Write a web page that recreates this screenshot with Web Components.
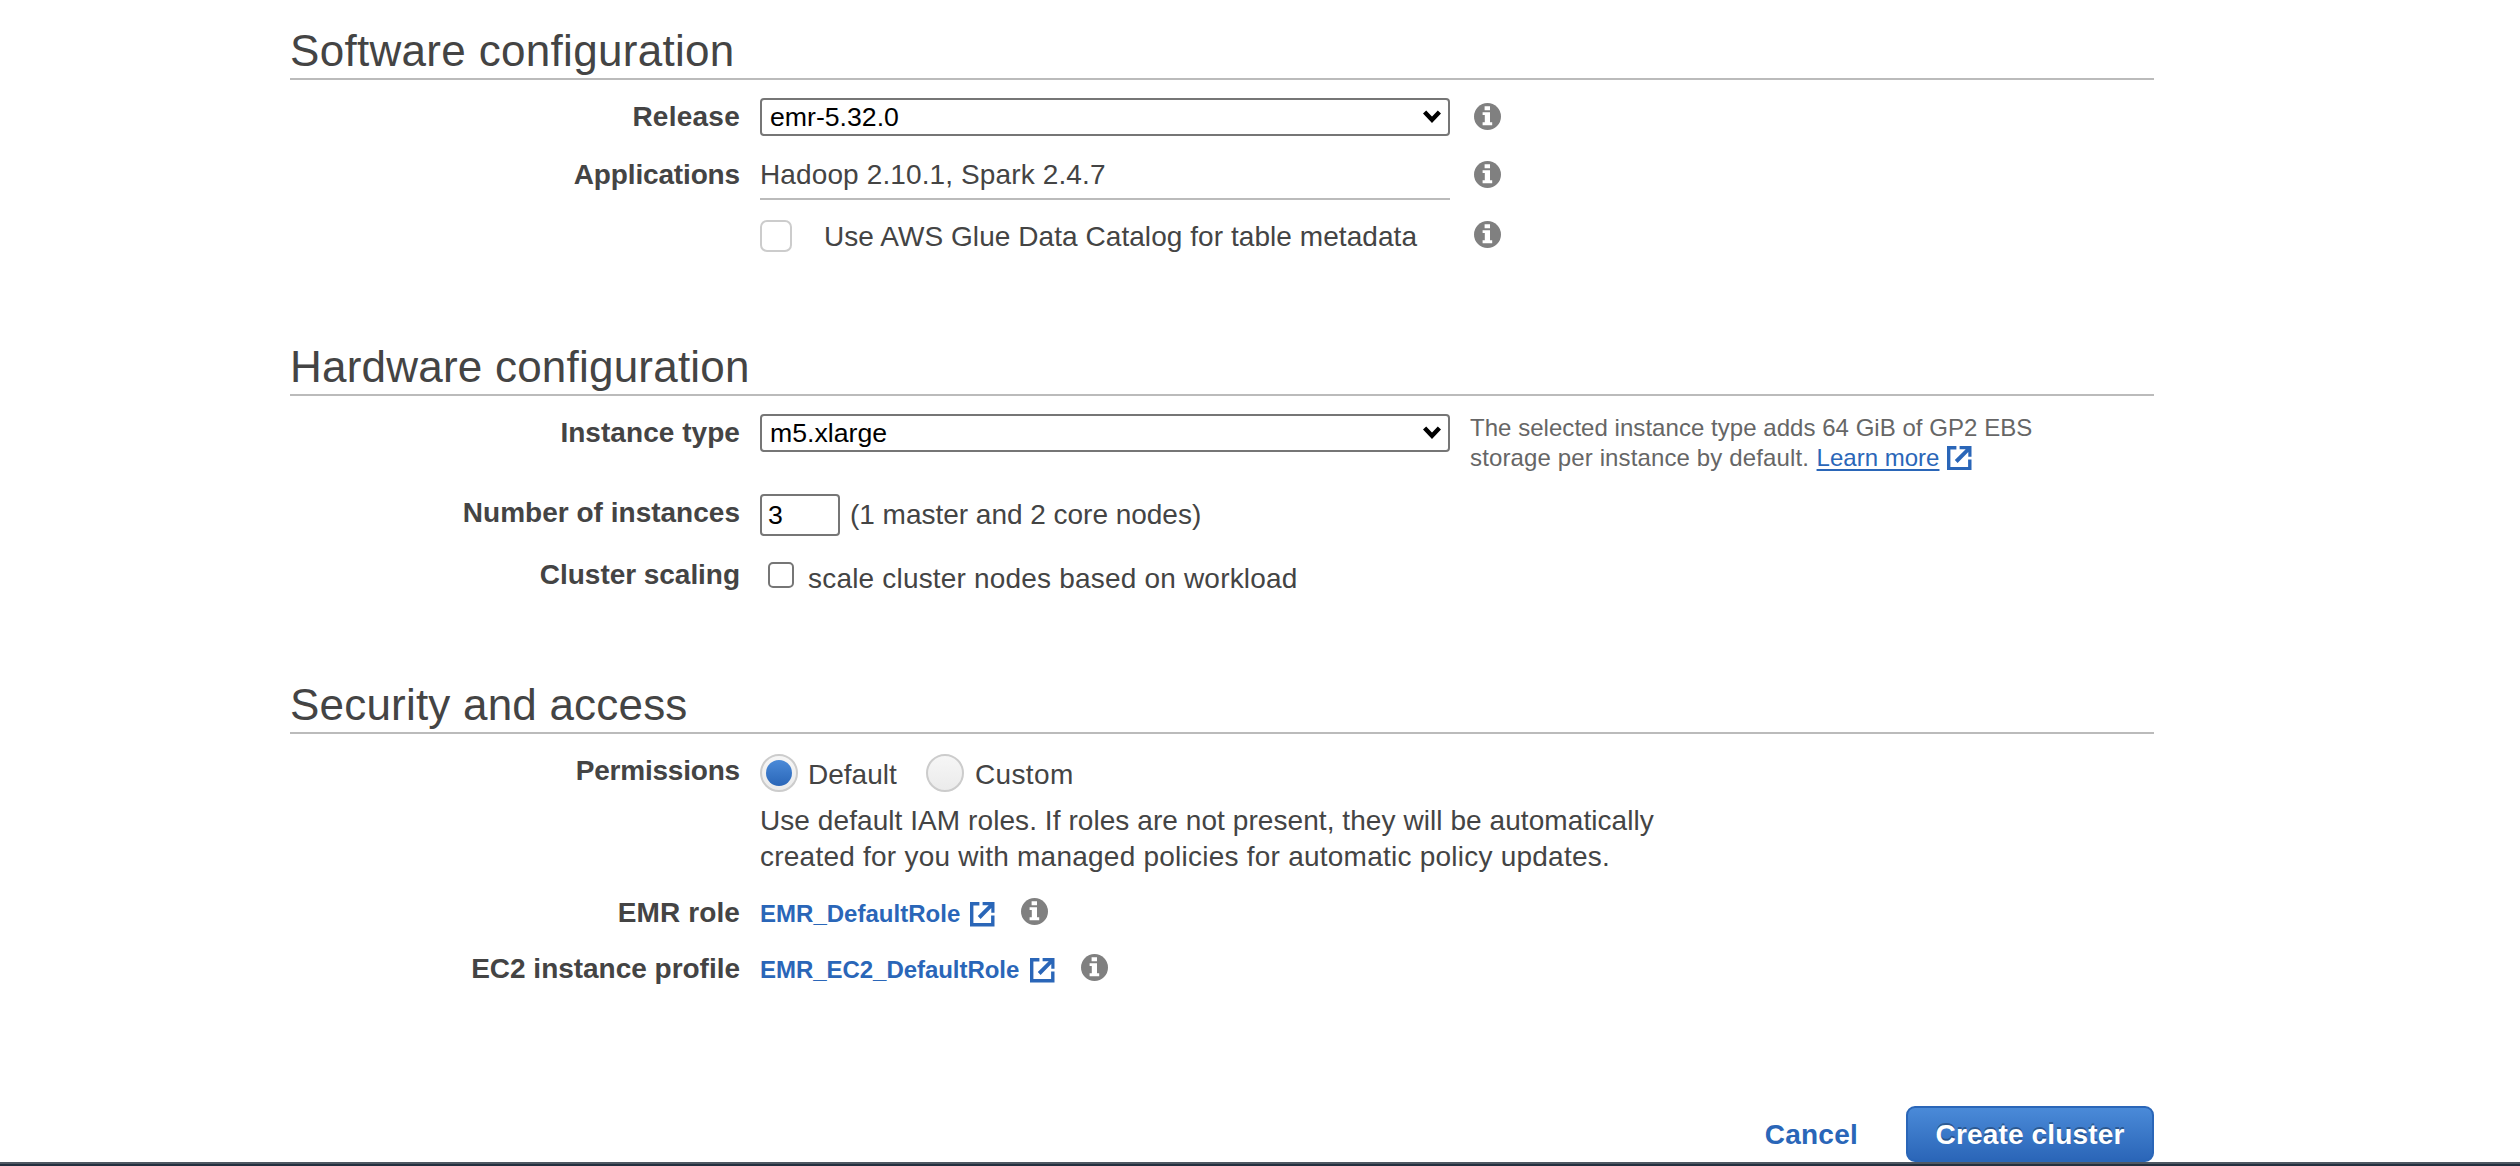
<!DOCTYPE html>
<html lang="en">
<head>
<meta charset="utf-8">
<title>Create cluster</title>
<style>
html,body{margin:0;background:#fff;overflow:hidden}
body{font-family:"Liberation Sans",Arial,sans-serif;font-size:28px;line-height:31px;color:#444}
</style>
</head>
<body>
<emr-page>
  <config-section heading="Software configuration" style="--height:316px;--head-ls:.31px">
    <form-row label="Release" style="--row:70px;--label-y:21px;--label-ls:.25px">
      <select-box style="--y:18px">emr-5.32.0</select-box>
      <info-icon style="--y:22.5px;--x:24px"></info-icon>
    </form-row>
    <form-row label="Applications" style="--row:60px;--label-y:9px;--label-ls:-.15px">
      <under-lined style="--y:9px;--ls:.12px">Hadoop 2.10.1, Spark 2.4.7</under-lined>
      <info-icon style="--y:10.5px;--x:24px"></info-icon>
    </form-row>
    <form-row label="" style="--row:60px;--label-y:9px">
      <check-box style="--y:10px;--size:32px;--radius:7px;--line:#ccc"></check-box>
      <form-text style="--y:11px;--x:32px;--ls:.06px;--w:626px">Use AWS Glue Data Catalog for table metadata</form-text>
      <info-icon style="--y:10.5px;--x:24px"></info-icon>
    </form-row>
  </config-section>
  <config-section heading="Hardware configuration" style="--height:338px;--head-ls:.22px">
    <form-row label="Instance type" style="--row:84px;--label-y:21px;--label-ls:.05px">
      <select-box style="--y:18px">m5.xlarge</select-box>
      <help-note style="--y:18px;--x:20px"></help-note>
    </form-row>
    <form-row label="Number of instances" style="--row:70px;--label-y:17px;--label-ls:.01px">
      <number-box style="--y:14px">3</number-box>
      <form-text style="--y:19px;--x:10px;--ls:-.02px">(1 master and 2 core nodes)</form-text>
    </form-row>
    <form-row label="Cluster scaling" style="--row:60px;--label-y:9px;--label-ls:-.04px">
      <check-box style="--y:12px;--x:8px;--size:26px;--radius:5px;--line:#767676"></check-box>
      <form-text style="--y:13px;--x:14px;--ls:.19px">scale cluster nodes based on workload</form-text>
    </form-row>
  </config-section>
  <config-section heading="Security and access" style="--height:426px;--head-ls:.2px">
    <form-row label="Permissions" style="--row:70px;--label-y:21px;--label-ls:-.2px">
      <radio-dot checked style="--y:20px"></radio-dot>
      <form-text style="--y:25px;--x:10px;--w:118px">Default</form-text>
      <radio-dot style="--y:20px"></radio-dot>
      <form-text style="--y:25px;--x:11px;--ls:.35px">Custom</form-text>
    </form-row>
    <form-row label="" style="--row:80px;--label-y:1px">
      <para-text style="--y:1px"></para-text>
    </form-row>
    <form-row label="EMR role" style="--row:56px;--label-y:13px;--label-ls:.12px">
      <role-link style="--y:16px;--w:210px;--ls:.02px">EMR_DefaultRole</role-link>
      <link-icon style="--y:18px"></link-icon>
      <info-icon style="--y:14px;--x:26px"></info-icon>
    </form-row>
    <form-row label="EC2 instance profile" style="--row:56px;--label-y:13px;--label-ls:-.02px">
      <role-link style="--y:16px;--w:270px;--ls:-.04px">EMR_EC2_DefaultRole</role-link>
      <link-icon style="--y:18px"></link-icon>
      <info-icon style="--y:14px;--x:26px"></info-icon>
    </form-row>
  </config-section>
  <action-bar slot="actions"></action-bar>
</emr-page>
<script>
const place = `:host{display:block;flex:none;box-sizing:border-box;margin:var(--y,0) 0 0 var(--x,0);white-space:nowrap}`;
function define(name, css, html) {
  customElements.define(name, class extends HTMLElement {
    constructor() {
      super();
      this.attachShadow({mode: 'open'}).innerHTML = `<style>${css}</style>${typeof html === 'function' ? html(this) : html}`;
    }
  });
}
const linkSvg = `<svg viewBox="0 0 24.5 24.5" width="24.5" height="24.5"><path d="M9.4 1.7H1.7V22.8H22.8V13.4" fill="none" stroke="#2a66b8" stroke-width="3.4"/><path d="M12.6 0H24.5V10.8H21.3V5.9L10.6 16.9 7.8 14.1 18.7 3.2H12.6Z" fill="#2a66b8"/></svg>`;

define('emr-page', `:host{display:flex;flex-direction:column;box-sizing:border-box;height:1166px;background:#fff}
  main{flex:1;box-sizing:border-box;width:1864px;margin-left:290px;padding-top:26px}
  footer{height:4px;box-sizing:border-box;background:#232f3e;border-top:2px solid #505863}`,
  `<main><slot></slot><slot name="actions"></slot></main><footer></footer>`);

define('config-section', `:host{display:block;height:var(--height)}
  h2{margin:0;font-size:44px;line-height:49px;font-weight:400;letter-spacing:var(--head-ls);padding-bottom:3px;border-bottom:2px solid #bbb}`,
  el => `<h2>${el.getAttribute('heading')}</h2><slot></slot>`);

define('form-row', `:host{display:flex;align-items:flex-start;height:var(--row);box-sizing:border-box}
  label{flex:none;width:450px;margin:var(--label-y) 20px 0 0;text-align:right;font-weight:700;letter-spacing:var(--label-ls)}`,
  el => `<label>${el.getAttribute('label')}</label><slot></slot>`);

define('form-text', place + `:host{letter-spacing:var(--ls,0);width:var(--w,auto)}`, `<slot></slot>`);

define('under-lined', place + `:host{width:690px;height:41px;border-bottom:2px solid #bbb;letter-spacing:var(--ls,0)}`, `<slot></slot>`);

define('select-box', place + `:host{display:flex;justify-content:space-between;width:690px;height:38px;border:2px solid #767676;border-radius:4px;padding:2px 6px 0 8px;font-size:26.67px;line-height:30px;color:#000;background:#fff}
  svg{margin-top:8px}`,
  `<span><slot></slot></span><svg width="20" height="14" viewBox="0 0 20 14"><path d="M2.6 2 10 9.8 17.4 2" fill="none" stroke="#000" stroke-width="4.4"/></svg>`);

define('number-box', place + `:host{width:80px;height:42px;border:2px solid #767676;border-radius:4px;padding:4px 6px 0;font-size:26.67px;line-height:30px;color:#000;background:#fff}`, `<slot></slot>`);

define('check-box', place + `:host{width:var(--size);height:var(--size);border:2px solid var(--line);border-radius:var(--radius);background:#fff}`, ``);

define('radio-dot', place + `:host{width:38px;height:38px;padding:4px;border:2px solid #ccc;border-radius:50%;background:linear-gradient(#f6f6f6,#ebebeb)}
  i{display:block;width:26px;height:26px;border-radius:50%}
  :host([checked]) i{background:linear-gradient(#4a8ad8,#2a66b8)}`, `<i></i>`);

define('info-icon', place + `svg{display:block}`,
  `<svg width="27" height="27" viewBox="0 0 27 27"><circle cx="13.5" cy="13.5" r="13.5" fill="#808080"/><path d="M10.6 3.2H16V7.2H10.6ZM8.6 9.2H16V19.2H18.2V22.2H8.6V19.2H10.8V12H8.6Z" fill="#fff"/></svg>`);

define('link-icon', place + `svg{display:block}`, linkSvg);

define('help-note', place + `:host{font-size:24px;line-height:27px;color:#666}
  div{height:30px;display:flex}
  .a{letter-spacing:.04px}.b{letter-spacing:.13px}
  a{margin-left:7.5px;color:#2a66b8;letter-spacing:.02px;text-decoration:underline;text-decoration-thickness:2px;text-underline-offset:3px}
  svg{margin:1.5px 0 0 8px}`,
  `<div class="a">The selected instance type adds 64 GiB of GP2 EBS</div><div><span class="b">storage per instance by default.</span><a>Learn more</a>${linkSvg}</div>`);

define('para-text', place + `div{height:36px}.a{letter-spacing:.07px}.b{letter-spacing:.235px}`,
  `<div class="a">Use default IAM roles. If roles are not present, they will be automatically</div><div class="b">created for you with managed policies for automatic policy updates.</div>`);

define('role-link', place + `:host{width:var(--w);font-size:24px;line-height:27px;font-weight:700;letter-spacing:var(--ls);color:#2a66b8}`, `<slot></slot>`);

define('action-bar', `:host{display:flex;justify-content:flex-end;align-items:flex-start;font-weight:700}
  a{margin:13px 48px 0 0;color:#2a66b8;letter-spacing:.25px}
  button{box-sizing:border-box;width:248px;height:56px;padding:0;margin:0;border:2px solid #2a66b8;border-radius:9px;background:linear-gradient(#4a8ad8,#2b66b8);color:#fff;font:inherit;line-height:31px;letter-spacing:.16px;text-shadow:0 -2px 0 rgba(0,0,0,.3)}`,
  `<a>Cancel</a><button>Create cluster</button>`);
</script>
</body>
</html>
